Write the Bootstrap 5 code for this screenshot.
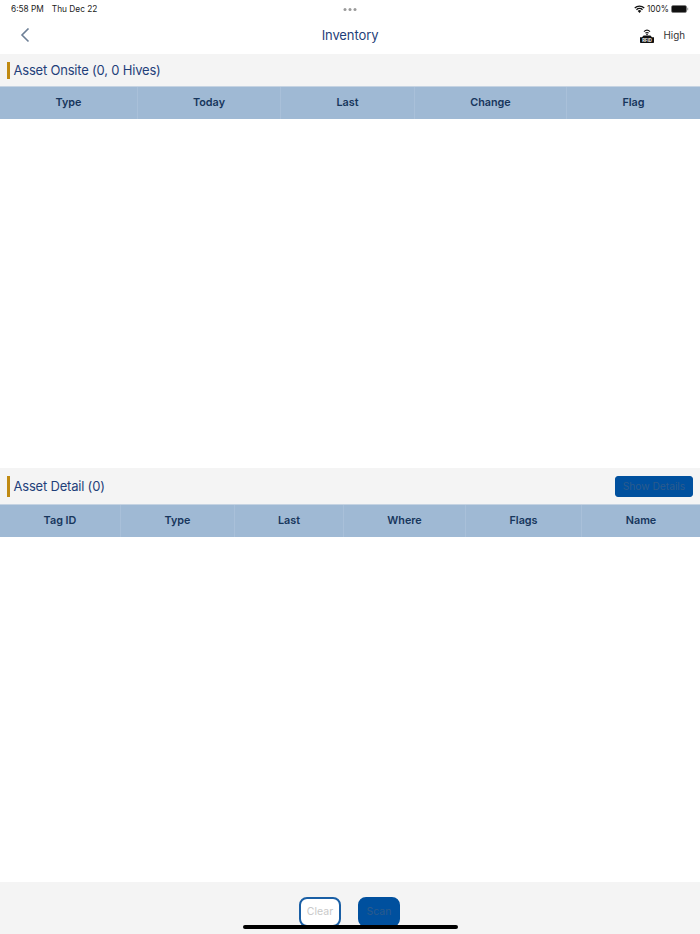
<!DOCTYPE html>
<html lang="en">
<head>
<meta charset="utf-8">
<title>Inventory</title>
<link href="https://cdn.jsdelivr.net/npm/bootstrap@5.3.0/dist/css/bootstrap.min.css" rel="stylesheet">
<style>
html,body{height:100%}
body{font-family:Inter,"Liberation Sans",sans-serif;background:#fff;overflow:hidden}
.app-shell{height:934px;width:700px;position:relative}
.status-row{height:18px;padding:3px 11px 0 11px;font-size:8.3px;line-height:12px;color:#222}
.status-right{height:12px;gap:2px}
.status-dots{gap:2px}
.status-dots i{display:block;width:3px;height:3px;border-radius:50%;background:#9a9a9a}
.nav-row{height:36px;padding:0 15px 0 20px;position:relative}
.nav-title{position:absolute;left:0;right:0;top:0;line-height:35px;text-align:center;font-size:13px;letter-spacing:-.1px;color:#1f3f7a}
.nav-high{font-size:9.8px;color:#333;margin-left:10px}
.sect-head{background:#f4f4f4;padding-left:7px;color:#1f3f7a;font-size:13px;letter-spacing:-.2px}
.sect-label{padding-top:2px}
.sect-a{height:32px}
.sect-b{height:36px;padding-right:7px}
.sect-bar{width:2.5px;background:#c08a12;margin-right:4px}
.sect-a .sect-bar{height:17px}
.sect-b .sect-bar{height:21px}
.col-heads{display:grid;height:33px;background:#9fb9d4;border-top:1px solid #c5d3e2;color:#17365c;font-size:10.8px;font-weight:600;text-align:center}
.col-heads>div{display:flex;align-items:center;justify-content:center;border-right:1px solid #a9c0d9;padding-top:1px}
.col-heads>div:last-child{border-right:0}
.heads-a{grid-template-columns:138px 143px 134px 152px 133px}
.heads-b{grid-template-columns:121px 114px 109px 122px 116px 118px}
.body-a{height:349px}
.body-b{height:345px}
.foot-row{height:52px;background:#f4f4f4;padding:15px 1px 0 0;gap:17px}
.act-btn{width:42px;height:30px;border-radius:8px;font-size:10.5px;padding:0;line-height:26px}
.act-btn:disabled{opacity:1}
.act-clear,.act-clear:disabled{background:#fff;border:2px solid #1a5fa5;color:#c9c9c9}
.act-scan,.act-scan:disabled{background:#00509e;border:2px solid #00509e;color:#2b5b8d}
.details-btn,.details-btn:disabled{width:78px;height:21px;background:#00509e;border:1px solid #00509e;color:#2b5b8d;border-radius:3px;font-size:10.2px;letter-spacing:0;padding:0;line-height:19px;opacity:1}
.home-bar{position:absolute;left:243px;top:925px;width:215px;height:4px;border-radius:2px;background:#000}
</style>
</head>
<body>
<div class="app-shell">
  <div class="status-row d-flex justify-content-between position-relative">
    <div class="d-flex gap-2"><span>6:58 PM</span><span>Thu Dec 22</span></div>
    <div class="status-dots d-flex position-absolute top-0 start-50 translate-middle-x pt-1 mt-1"><i></i><i></i><i></i></div>
    <div class="status-right d-flex align-items-center">
      <svg width="11" height="8" viewBox="0 0 11 8" aria-hidden="true"><path d="M.3 2.6a7.4 7.4 0 0 1 10.4 0l-.9.9a6.1 6.1 0 0 0-8.6 0z" fill="#111"/><path d="M2 4.3a5 5 0 0 1 7 0l-.9.9a3.7 3.7 0 0 0-5.2 0z" fill="#111"/><path d="M3.7 6a2.5 2.5 0 0 1 3.6 0L5.5 7.9z" fill="#111"/></svg>
      <span>100%</span>
      <svg width="18" height="8" viewBox="0 0 18 8" aria-hidden="true"><rect x=".5" y=".5" width="15" height="7" rx="1.5" fill="#111" stroke="#777" stroke-width=".6"/><rect x="16.2" y="2.7" width="1" height="2.6" fill="#999"/></svg>
    </div>
  </div>
  <div class="nav-row d-flex align-items-center justify-content-between">
    <svg width="10" height="16" viewBox="0 1 10 16" aria-hidden="true"><path d="M8.5 1.5 2 8l6.5 6.5" fill="none" stroke="#6d7f96" stroke-width="1.6"/></svg>
    <div class="nav-title">Inventory</div>
    <div class="d-flex align-items-center">
      <svg width="14" height="15" viewBox="0 1 14 15" aria-hidden="true"><path d="M3.6 3.2a5 5 0 0 1 6.8 0l-.7.7a4 4 0 0 0-5.4 0z" fill="#111"/><path d="M5 4.8a3 3 0 0 1 4 0l-.7.7a2 2 0 0 0-2.6 0z" fill="#111"/><circle cx="7" cy="6.4" r=".8" fill="#111"/><path d="M2 9.2 3.6 7.4h6.8L12 9.2H14v5a.8.8 0 0 1-.8.8H.8a.8.8 0 0 1-.8-.8v-5z" fill="#111"/><text x="7" y="13.6" font-size="4.2" font-weight="700" fill="#fff" text-anchor="middle" font-family="Inter,sans-serif">RFID</text></svg>
      <span class="nav-high">High</span>
    </div>
  </div>
  <div class="sect-head sect-a d-flex align-items-center"><span class="sect-bar"></span><span class="sect-label">Asset Onsite (0, 0 Hives)</span></div>
  <div class="col-heads heads-a"><div>Type</div><div>Today</div><div>Last</div><div>Change</div><div>Flag</div></div>
  <div class="body-a"></div>
  <div class="sect-head sect-b d-flex align-items-center"><span class="sect-bar"></span><span class="sect-label">Asset Detail (0)</span><button class="btn details-btn ms-auto" disabled>Show Details</button></div>
  <div class="col-heads heads-b"><div>Tag ID</div><div>Type</div><div>Last</div><div>Where</div><div>Flags</div><div>Name</div></div>
  <div class="body-b"></div>
  <div class="foot-row d-flex justify-content-center align-items-start">
    <button class="btn act-btn act-clear" disabled>Clear</button>
    <button class="btn act-btn act-scan" disabled>Scan</button>
  </div>
  <div class="home-bar"></div>
</div>
<script src="https://cdn.jsdelivr.net/npm/bootstrap@5.3.0/dist/js/bootstrap.bundle.min.js"></script>
</body>
</html>
